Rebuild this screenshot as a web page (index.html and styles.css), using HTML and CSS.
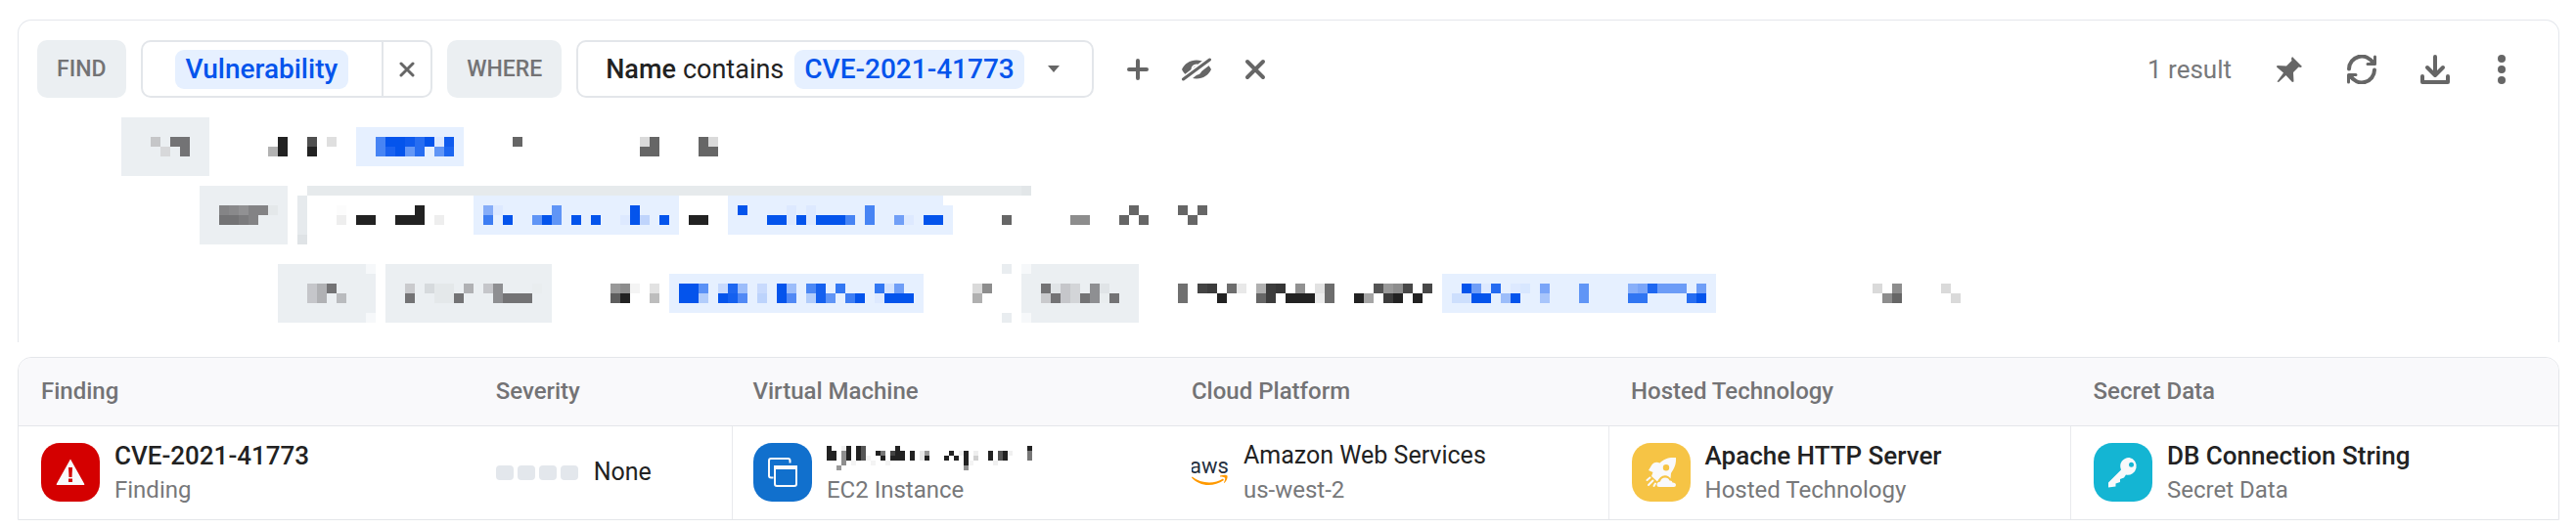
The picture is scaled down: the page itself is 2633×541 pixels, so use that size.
FILE: index.html
```html
<!DOCTYPE html>
<html lang="en">
<head>
<meta charset="utf-8">
<title>Security graph query</title>
<link rel="stylesheet" href="styles.css">
</head>
<body>
<main class="page">
  <section class="query">
    <div class="query-bar">
      <span class="keyword">FIND</span>
      <div class="control entity">
        <button class="entity-name" type="button"><span class="pill">Vulnerability</span></button>
        <button class="entity-clear" type="button" aria-label="Remove Vulnerability">
          <svg width="16" height="16" viewBox="0 0 16 16"><path d="M2 2 14 14M14 2 2 14" class="stroke"/></svg>
        </button>
      </div>
      <span class="keyword">WHERE</span>
      <button class="control filter" type="button">
        <b class="field">Name</b>
        <span>contains</span>
        <span class="pill value">CVE-2021-41773</span>
        <svg class="caret" width="12" height="7" viewBox="0 0 12 7"><path d="M0 0H12L6 7Z"/></svg>
      </button>
      <div class="query-actions">
        <button class="icon-button" type="button" aria-label="Add filter">
          <svg width="24" height="24" viewBox="0 0 24 24"><path d="M12 3V21M3 12H21" class="stroke heavy"/></svg>
        </button>
        <button class="icon-button" type="button" aria-label="Hide">
          <svg width="32" height="24" viewBox="0 0 32 24"><path fill-rule="evenodd" d="M16 2.500C9 2.500 3.500 6.500 1 12C3.500 17.500 9 21.500 16 21.500S28.500 17.500 31 12C28.500 6.500 23 2.500 16 2.500ZM16 6.500A5.500 5.500 0 1 1 16 17.500A5.500 5.500 0 1 1 16 6.500Z"/><circle cx="16" cy="12" r="3.500"/><path d="M3 23 30 2" class="gap-stroke"/><path d="M2.500 22 29.500 2" class="stroke"/></svg>
        </button>
        <button class="icon-button" type="button" aria-label="Clear filter">
          <svg width="24" height="24" viewBox="0 0 24 24"><path d="M4 4 20 20M20 4 4 20" class="stroke heavy"/></svg>
        </button>
      </div>
      <div class="result-actions">
        <span class="result-count">1 result</span>
        <button class="icon-button" type="button" aria-label="Pin">
          <svg width="28" height="28" viewBox="0 0 28 28"><path d="M17 1 27 11 25.500 12 23.500 11.500 18 17 18.500 26.500 17 27 10.500 20 3 27 1.500 26.500 8 17.500 1 11.500 1.500 10 11 10.500 16.500 5 16 3Z"/></svg>
        </button>
        <button class="icon-button" type="button" aria-label="Refresh">
          <svg width="30" height="30" viewBox="0 0 30 30"><path d="M2 14.500A13 13 0 0 1 26.500 8.500M28 15.500A13 13 0 0 1 3.500 21.500" class="stroke heavy"/><path d="M28.500 2V9.500H21M1.500 28V20.500H9" class="stroke"/><path d="M29 3V10H21ZM1 27V20H9Z"/></svg>
        </button>
        <button class="icon-button" type="button" aria-label="Download">
          <svg width="30" height="30" viewBox="0 0 30 30"><path d="M15 2V20M7 13 15 21 23 13M2 22V28H28V22" class="stroke heavy"/></svg>
        </button>
        <button class="icon-button" type="button" aria-label="More">
          <svg width="16" height="30" viewBox="0 0 16 30"><circle cx="8" cy="4" r="4"/><circle cx="8" cy="15" r="4"/><circle cx="8" cy="26" r="4"/></svg>
        </button>
      </div>
    </div>
    <div class="redacted-lines">
      <svg class="mosaic" data-mosaic="line1" data-cols="80" data-rows="6" data-cell="10"></svg>
      <svg class="mosaic" data-mosaic="line2" data-cols="130" data-rows="6" data-cell="10"></svg>
      <svg class="mosaic indented" data-mosaic="line3" data-cols="205" data-rows="6" data-cell="10"></svg>
    </div>
  </section>

  <section class="results">
    <table>
      <colgroup>
        <col class="c-finding"><col class="c-severity"><col class="c-vm"><col class="c-cloud"><col class="c-tech"><col class="c-secret">
      </colgroup>
      <thead>
        <tr><th>Finding</th><th>Severity</th><th>Virtual Machine</th><th>Cloud Platform</th><th>Hosted Technology</th><th>Secret Data</th></tr>
      </thead>
      <tbody>
        <tr>
          <td>
            <div class="item">
              <span class="tile red"><svg width="60" height="60" viewBox="0 0 60 60"><path class="fg" d="M30 16.500 44 41.500Q45 43 43 43H17Q15 43 16 41.500Z"/><path class="cut" d="M28 25H32L31.500 35H28.500Z"/><rect class="cut" x="28" y="36.500" width="4" height="3.500"/></svg></span>
              <div class="text"><strong>CVE-2021-41773</strong><span class="sub">Finding</span></div>
            </div>
          </td>
          <td>
            <div class="severity"><span class="level"><i></i><i></i><i></i><i></i></span><span>None</span></div>
          </td>
          <td class="divided">
            <div class="item">
              <span class="tile blue"><svg width="60" height="60" viewBox="0 0 60 60"><path class="line" d="M20.500 35.500H18Q16 35.500 16 33.500V18Q16 16 18 16H35.500Q37.500 16 37.500 18V20.500"/><rect class="line" x="22" y="24" width="22" height="20" rx="2"/><path class="fg" d="M21 23H45V27H21Z"/></svg></span>
              <div class="text"><svg class="mosaic name" data-mosaic="vm" data-cols="42" data-rows="5" data-cell="5"></svg><span class="sub">EC2 Instance</span></div>
            </div>
          </td>
          <td>
            <div class="item cloud">
              <svg width="38" height="32" viewBox="0 0 38 32"><text class="aws" x="18" y="17" text-anchor="middle">aws</text><path d="M0.500 20.500C9 27.500 23 28.500 32 22.500L33 24C22 31.500 8 30.500 0 21.500Z" fill="#ff9900"/><path d="M29 19.500C32 18.500 35.500 18.500 36.500 19.500C37 21 36 24.500 33.500 27L33 26.500C34 24.500 34.500 22 34 21.500C33.500 21 31 20.500 29 20.500Z" fill="#ff9900"/></svg>
              <div class="text"><span class="name">Amazon Web Services</span><span class="sub">us-west-2</span></div>
            </div>
          </td>
          <td class="divided">
            <div class="item">
              <span class="tile yellow"><svg width="60" height="60" viewBox="0 0 60 60"><path class="fg" fill-rule="evenodd" d="M45 15C37 14.500 32.500 16.500 28.500 20.500C25 19 22 20 20 23L17 28L21.500 30L20 34L26 39.500C28 35.500 30.500 33 34 33.200C36.500 33.500 38.500 34.500 39.500 36.500L40 31C43.500 26 45.500 21 45 15ZM35 22A3.200 3.200 0 1 1 35 28.400A3.200 3.200 0 1 1 35 22Z"/><path class="fg" d="M28 45Q25.500 45 25.500 42.500Q25.500 40 29 39.500Q30 35.500 34 35.500Q37.500 35.500 38.500 38.500Q41 38 41.500 40.500Q45 40.500 45 43Q45 45 43 45Z"/><path class="flame" d="M15.500 38 18.500 35.500M17 43 21.500 38.500M22.500 44 24 41.500"/></svg></span>
              <div class="text"><strong>Apache HTTP Server</strong><span class="sub">Hosted Technology</span></div>
            </div>
          </td>
          <td class="divided">
            <div class="item">
              <span class="tile teal"><svg width="60" height="60" viewBox="0 0 60 60"><path class="fg" fill-rule="evenodd" d="M36.500 15A8.800 8.800 0 1 1 33 32.500L31 35.500 27 37V40L22.500 41.500V44.500L15 45.500V40.500L28 27.500A8.800 8.800 0 0 1 36.500 15ZM38.500 19.800A2.500 2.500 0 1 0 38.500 24.800A2.500 2.500 0 1 0 38.500 19.800Z"/></svg></span>
              <div class="text"><strong>DB Connection String</strong><span class="sub">Secret Data</span></div>
            </div>
          </td>
        </tr>
      </tbody>
    </table>
  </section>
</main>
<script src="mosaic.js"></script>
</body>
</html>
```

FILE: styles.css
```css
* { box-sizing: border-box; }

body {
  margin: 0;
  background: #fff;
  color: #222;
  font-family: Roboto, "Noto Sans", sans-serif;
  font-size: 25px;
  line-height: 30px;
}

button {
  font: inherit;
  color: inherit;
  background: none;
  border: 0;
  padding: 0;
  cursor: pointer;
}

svg { display: block; flex: none; fill: #666; }

.page {
  display: flex;
  flex-direction: column;
  gap: 15px;
  padding: 20px 17px 8px 18px;
}

/* Query builder */
.query {
  border: 1px solid #e4e7ec;
  border-bottom: 0;
  border-radius: 14px 14px 0 0;
  padding-bottom: 20px;
}

.query-bar {
  display: flex;
  align-items: center;
  gap: 15px;
  padding: 20px 50px 20px 19px;
}

.keyword {
  display: flex;
  align-items: center;
  justify-content: center;
  height: 59px;
  padding: 0 20px;
  border-radius: 10px;
  background: #ebeff2;
  color: #737375;
  font-size: 23px;
  font-weight: 500;
}

.control {
  display: flex;
  align-items: center;
  height: 59px;
  border: 2px solid #e3e6ea;
  border-radius: 10px;
}

.pill {
  display: flex;
  align-items: center;
  height: 40px;
  padding: 0 10px;
  border-radius: 9px;
  background: #e6f0ff;
  color: #0454ec;
  font-size: 28px;
  font-weight: 500;
}

.entity-name { padding: 0 36px; }
.entity .pill { padding: 0 11px; }
.entity-name { padding: 0 34px 0 33px; }

.entity-clear {
  display: flex;
  align-items: center;
  justify-content: center;
  align-self: stretch;
  width: 50px;
  border-left: 2px solid #e3e6ea;
}

.filter { gap: 7px; padding: 0 33px 0 28px; font-size: 27px; }
.field { font-weight: 500; }
.value { margin-left: 4px; }
.caret { margin-left: 17px; }

.stroke {
  fill: none;
  stroke: #666;
  stroke-width: 3;
  stroke-linecap: round;
  stroke-linejoin: round;
}
.heavy { stroke-width: 4; }
.gap-stroke { fill: none; stroke: #fff; stroke-width: 8; }

.query-actions { display: flex; gap: 32px; margin-left: 18px; }
.icon-button { display: flex; align-items: center; justify-content: center; }

.result-actions { display: flex; align-items: center; gap: 45px; margin-left: auto; }
.result-count { color: #77787a; font-size: 26px; }

.redacted-lines {
  display: flex;
  flex-direction: column;
  gap: 10px;
}
.redacted-lines .mosaic { margin-left: -15px; }
.indented { margin-top: 10px; }

/* Results table */
.results {
  border: 1px solid #e4e6ea;
  border-radius: 14px 14px 0 0;
  overflow: hidden;
}

table { width: 100%; table-layout: fixed; border-collapse: collapse; }

.c-finding { width: 17.9%; }
.c-severity { width: 10.2%; }
.c-vm { width: 17.2%; }
.c-cloud { width: 17.3%; }
.c-tech { width: 18.2%; }

th {
  height: 69px;
  padding: 0 23px;
  background: #f9f9fb;
  border-bottom: 1px solid #e4e6ea;
  color: #737375;
  font-size: 24px;
  font-weight: 500;
  text-align: left;
}

td { height: 96px; padding: 0 23px; }
.divided { border-left: 1px solid #e9eaed; }
th:nth-child(3), td:nth-child(3) { padding-left: 21px; }

.item { display: flex; align-items: center; gap: 15px; }

.text { display: flex; flex-direction: column; gap: 5px; }
.text strong { font-size: 26px; font-weight: 500; }
.sub { color: #77787a; font-size: 24px; }

.tile { width: 60px; height: 60px; border-radius: 19px; flex: none; }
.red { background: #d40000; }
.blue { background: #1170cd; }
.yellow { background: #f6c445; }
.teal { background: #14b5d3; }

.fg { fill: #f9f9fb; }
.cut { fill: #d40000; }
.line { fill: none; stroke: #f9f9fb; stroke-width: 2; }
.flame { fill: none; stroke: #f9f9fb; stroke-width: 2; stroke-linecap: round; }

.aws { fill: #252f3e; font-size: 22px; font-weight: 400; }

.severity { display: flex; align-items: center; gap: 16px; }
.level { display: flex; gap: 4px; }
.level i { width: 18px; height: 15px; border-radius: 4px; background: #e3e7ec; }

.mosaic.name { margin-top: 5px; }
```

FILE: mosaic.js
```js
// Redacted text. Each entry: column, row, width, height, colour.
const B = "#0454ec", K = "#222", G = "#737375", P = "#e6f0ff", H = "#ebeff2", D = "#666";
const data = {
  line1: [
    [12,0,9,6,H],[15,2,1,1,"#c5c6c8"],[16,3,1,1,"#d7d8da"],[17,2,2,1,G],[18,3,1,1,G],
    [27,3,1,1,"#b3b3b3"],[28,2,1,2,K],[31,2,1,1,"#505050"],[31,3,1,1,K],[33,2,1,1,"#dfdfdf"],
    [36,1,11,4,P],[38,2,1,2,"#4784f4"],[39,2,2,2,B],[39,3,1,1,"#1a62f0"],[41,2,1,1,"#0f5bee"],[41,3,1,1,"#6497f6"],
    [42,2,1,2,"#276df1"],[43,2,1,1,B],[44,2,1,1,"#dde9ff"],[44,3,1,1,"#6095f6"],[45,2,1,1,"#0f5bee"],[45,3,1,1,"#1b66f1"],
    [52,2,1,1,D],[65,2,1,1,"#dadada"],[65,3,1,1,D],[66,2,1,2,D],[71,2,1,2,D],[72,2,1,1,"#dadada"],[72,3,1,1,D]
  ],
  line2: [
    [20,0,9,6,H],[22,2,1,1,"#848486"],[22,3,2,1,G],[23,2,1,1,"#89898b"],[24,2,1,1,"#919193"],[24,3,1,1,"#7b7b7d"],
    [25,2,1,2,"#838385"],[26,2,1,1,"#838385"],[27,2,1,1,"#e4e8ea"],
    [30,1,1,4,"#e6eaed"],[30,5,1,1,"#dfe3e6"],[31,0,73,1,"#e6eaec"],[104,0,1,1,"#e2e6e8"],
    [34,2,1,1,"#fcfcfc"],[34,3,1,1,"#eee"],[36,3,2,1,K],[40,3,3,1,K],[42,2,1,1,K],[44,3,1,1,"#eee"],
    [48,1,21,4,P],[49,2,1,1,"#86adf8"],[49,3,1,1,"#3d7df3"],[50,2,1,1,"#dde9ff"],[51,3,1,1,B],[54,3,1,1,"#6095f6"],[55,3,1,1,B],
    [56,2,1,2,"#6095f6"],[58,3,1,1,B],[60,3,1,1,B],[63,3,1,1,"#dde9ff"],[64,2,1,2,B],[65,3,1,1,"#bfd4fc"],[67,3,1,1,B],
    [70,3,2,1,K],[74,1,22,4,P],[96,2,1,3,P],[75,2,1,1,B],[78,3,2,1,B],[80,2,1,2,"#dde9ff"],[81,3,1,1,B],[82,2,1,2,"#dde9ff"],
    [83,3,3,1,B],[86,3,1,1,"#4784f4"],[88,2,1,2,"#4784f4"],[91,3,1,1,"#719ff7"],[92,3,1,1,"#dde9ff"],[94,3,2,1,B],
    [102,3,1,1,D],[109,3,2,1,"#8d8d8d"],[114,3,1,1,D],[115,2,1,1,D],[116,3,1,1,D],[120,2,1,1,D],[121,3,1,1,D],[122,2,1,1,D]
  ],
  line3: [
    [28,0,10,6,H],[37,0,1,1,"#f6f8fa"],[37,5,1,1,"#f6f8fa"],[31,2,1,2,"#c5c6ca"],[32,2,1,2,"#b0b1b4"],[33,2,1,1,G],[34,3,1,1,"#b9bbbe"],
    [39,0,17,6,H],[41,2,1,1,"#c9cacd"],[41,3,1,1,G],[43,2,1,1,"#d6dadd"],[44,2,2,2,"#e4e8ea"],[46,3,1,1,G],[47,2,1,1,"#b0b1b4"],
    [49,2,1,1,"#c5c6ca"],[50,2,1,2,"#8e8f92"],[51,3,3,1,G],[54,2,1,1,"#e9edef"],
    [62,2,1,1,"#999"],[62,3,1,1,"#5e5e5e"],[63,2,1,1,"#8d8d8d"],[63,3,1,1,K],[64,2,1,1,"#f4f4f4"],[66,2,1,1,"#e2e2e2"],[66,3,1,1,"#bdbdbd"],
    [68,1,26,4,P],[69,2,2,2,B],[71,2,1,1,"#5a91f6"],[71,3,1,1,"#b2cdfb"],[73,2,1,1,"#c8dafd"],[73,3,1,1,B],[74,2,1,1,"#1e67f1"],[74,3,1,1,"#1460ef"],
    [75,2,1,1,"#9cbdfa"],[75,3,1,1,"#5189f5"],[77,2,1,1,"#c8dafd"],[77,3,1,1,"#bcd3fc"],[79,2,1,2,B],[80,2,1,1,"#9cbdfa"],[80,3,1,1,"#5189f5"],
    [82,2,1,1,"#4b87f4"],[82,3,1,1,"#b2cdfb"],[83,2,1,2,"#1460ef"],[84,3,1,1,"#6095f6"],[85,2,1,1,"#3378f3"],[86,3,1,1,"#3f7ef3"],[87,3,1,1,B],
    [89,2,1,1,"#3378f3"],[89,3,1,1,"#dde9ff"],[90,2,1,1,"#d4e3fe"],[91,2,1,1,"#6f9ef7"],[90,3,3,1,B],
    [99,2,1,1,"#dadada"],[99,3,1,1,"#b0b0b0"],[100,2,1,1,"#8d8d8d"],[102,0,1,1,"#e9edf0"],[102,5,1,1,"#e9edf0"],
    [104,0,12,6,H],[104,0,1,1,"#f6f8fa"],[104,5,1,1,"#f6f8fa"],[106,2,1,1,G],[106,3,1,1,"#c9cacd"],[107,2,1,1,"#e0e4e7"],[107,3,1,1,G],
    [108,2,1,2,"#c5c6ca"],[109,2,1,2,"#d3d5d8"],[110,3,1,1,G],[111,2,1,2,"#8e8f92"],[112,2,1,1,"#e0e4e7"],[112,3,1,1,"#e9edef"],[113,3,1,1,G],
    [120,2,1,2,"#707070"],[122,2,1,1,"#444"],[123,2,1,1,"#3c3c3c"],[124,3,1,1,K],[125,2,1,1,"#6d6d6d"],[126,2,1,1,"#e9e9e9"],
    [128,2,1,1,"#b0b0b0"],[128,3,1,1,D],[129,2,1,2,"#3c3c3c"],[130,2,1,1,"#363636"],[131,3,3,1,K],[132,2,1,1,"#919191"],
    [134,2,1,1,"#e2e2e2"],[134,3,1,1,"#ececec"],[135,2,1,2,"#6d6d6d"],[138,3,1,1,K],[139,3,1,1,"#a5a5a5"],[140,2,1,1,"#555"],
    [141,2,1,1,"#999"],[141,3,1,1,"#3c3c3c"],[142,2,1,1,"#8d8d8d"],[142,3,1,1,K],[143,2,1,1,"#484848"],[144,3,1,1,K],[145,2,1,1,"#484848"],
    [147,1,28,4,P],[148,3,2,1,"#cddffd"],[149,2,1,1,B],[150,2,1,1,"#6f9ef7"],[151,2,1,1,"#dde9ff"],[150,3,2,1,B],[152,2,1,1,"#246bf1"],
    [153,3,1,1,"#9cbdfa"],[154,2,1,1,"#dde9ff"],[154,3,1,1,B],[155,2,1,1,"#d8e7ff"],[157,2,1,1,"#7aa5f8"],[157,3,1,1,"#a8c5fb"],[161,2,1,2,"#6095f6"],
    [166,2,1,1,"#88aff9"],[167,2,1,1,"#7aa5f8"],[166,3,2,1,"#3075f2"],[168,2,1,1,"#1e67f1"],[169,2,3,1,"#6c9cf7"],[172,3,1,1,"#276df1"],
    [173,2,1,1,"#6f9ef7"],[173,3,1,1,B],[191,2,1,1,"#dadada"],[192,3,1,1,"#8d8d8d"],[193,2,1,1,"#8d8d8d"],[193,3,1,1,D],[198,2,1,1,"#dadada"],[199,3,1,1,"#dadada"]
  ],
  vm: [
    [0,0,1,3,K],[1,1,1,2,K],[2,4,1,1,"#999"],[3,0,1,1,"#f0f0f0"],[3,1,1,3,"#8e8e8e"],[4,0,1,3,K],[5,3,1,1,"#f4f4f4"],
    [6,0,1,3,K],[7,0,1,3,"#555"],[8,2,1,1,"#f4f4f4"],[9,3,1,1,"#f4f4f4"],[10,1,1,1,K],[11,1,1,1,"#777"],[11,2,1,1,K],[12,3,1,1,"#f4f4f4"],
    [13,1,1,1,"#444"],[13,2,1,1,K],[14,0,1,3,K],[15,1,1,2,K],[17,1,1,2,K],[19,1,1,2,"#e8e8e8"],[20,1,1,1,"#999"],[20,2,1,1,K],
    [24,2,1,1,K],[25,1,1,1,K],[26,2,1,1,K],[27,1,1,1,"#f0f0f0"],[28,1,1,3,K],[28,4,1,1,"#8e8e8e"],[29,3,1,1,"#f4f4f4"],
    [30,1,1,1,"#eee"],[30,2,1,1,"#d0d0d0"],[33,1,1,2,K],[34,3,1,1,"#f0f0f0"],[35,1,1,2,"#555"],[36,1,1,2,K],[37,1,1,1,"#f0f0f0"],
    [41,0,1,1,K],[41,1,1,2,"#777"]
  ]
};

document.querySelectorAll("[data-mosaic]").forEach(function (svg) {
  const { mosaic, cols, rows, cell } = svg.dataset;
  svg.setAttribute("viewBox", "0 0 " + cols + " " + rows);
  svg.setAttribute("width", cols * cell);
  svg.setAttribute("height", rows * cell);
  svg.setAttribute("shape-rendering", "crispEdges");
  svg.innerHTML = data[mosaic].map(function ([x, y, w, h, c]) {
    return `<rect x="${x}" y="${y}" width="${w}" height="${h}" fill="${c}"/>`;
  }).join("");
});
```
